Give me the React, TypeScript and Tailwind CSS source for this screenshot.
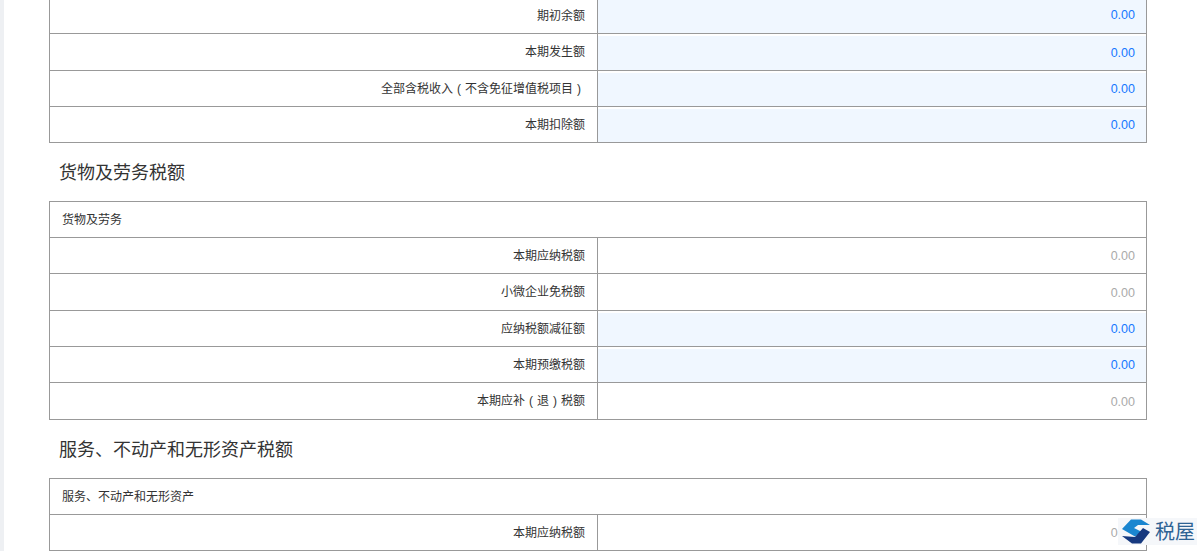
const font = "font-['Liberation_Sans','Noto_Sans_CJK_SC',sans-serif]";

type RowProps = { label: React.ReactNode; editable?: boolean; h?: string; first?: boolean };

const Row = ({ label, editable, h = "h-[36px]", first }: RowProps) => (
  <div className={`flex ${h} border-b border-[#999]`}>
    <div className={`flex w-[548px] shrink-0 items-center justify-end border-r border-[#999] pr-3 text-xs text-[#333] ${first ? "pb-[2px]" : ""}`}>
      {label}
    </div>
    <div
      className={`flex flex-1 items-center justify-end pr-[11px] text-[12.5px] ${
        editable ? "bg-[#f0f7ff] text-[#1677ff]" : "pt-[2px] text-[#aaa]"
      } ${editable && !first ? "mt-[2px]" : ""} ${first ? "pb-[3px]" : ""}`}
    >
      0.00
    </div>
  </div>
);

// the reference centres its brackets in a full-width cell
const Paren = ({ c }: { c: string }) => <span className="inline-block w-3 text-center">{c}</span>;

const Head = ({ text }: { text: string }) => (
  <div className="flex h-[58px] items-center pt-[2px] pl-[10px] text-lg text-[#333]">{text}</div>
);

const Caption = ({ text }: { text: string }) => (
  <div className="flex h-[36px] items-center border-b border-[#999] pl-3 text-xs text-[#333]">{text}</div>
);

const Logo = () => (
  <div className="absolute top-[518px] left-[1118px] flex h-[27px] w-[79px] items-center bg-[#f5f7fa] pl-1">
    <svg width="28" height="25" viewBox="0 0 28 25" className="shrink-0">
      <path d="M9 .5h10L28 6H16l-4 3 8 4-7 4.5L0 10z" fill="#1a86d0" />
      <path d="M21 9l7 4-9 11.5h-9L0 17l13 1z" fill="#16397f" />
    </svg>
    <span className="ml-[5px] text-xl leading-none whitespace-nowrap text-[#2f6394]">税屋</span>
  </div>
);

export default function App() {
  return (
    <div className={`relative h-[551px] w-[1204px] overflow-hidden bg-white ${font}`}>
      <div className="absolute inset-y-0 left-0 w-[4px] bg-[#eef0f3]" />
      <div className="ml-[49px] w-[1098px]">
        <div className="border-x border-[#999]">
          <Row label="期初余额" editable first h="h-[34px]" />
          <Row label="本期发生额" editable h="h-[37px]" />
          <Row label={<>全部含税收入<Paren c="(" />不含免征增值税项目<Paren c=")" /></>} editable />
          <Row label="本期扣除额" editable />
        </div>
        <Head text="货物及劳务税额" />
        <div className="border-x border-t border-[#999]">
          <Caption text="货物及劳务" />
          <Row label="本期应纳税额" />
          <Row label="小微企业免税额" h="h-[37px]" />
          <Row label="应纳税额减征额" editable />
          <Row label="本期预缴税额" editable />
          <Row label={<>本期应补<Paren c="(" />退<Paren c=")" />税额</>} h="h-[37px]" />
        </div>
        <Head text="服务、不动产和无形资产税额" />
        <div className="border-x border-t border-[#999]">
          <Caption text="服务、不动产和无形资产" />
          <Row label="本期应纳税额" />
        </div>
      </div>
      <Logo />
    </div>
  );
}
